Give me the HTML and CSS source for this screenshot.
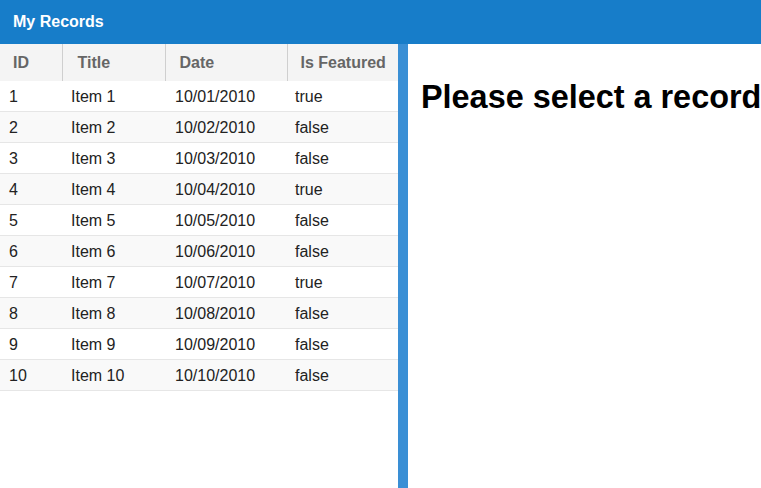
FILE: index.html
```html
<!DOCTYPE html>
<html>
<head>
<meta charset="utf-8">
<link rel="stylesheet" href="styles.css">
</head>
<body>
<div class="app">
  <header class="topbar">My Records</header>
  <div class="main">
    <div class="list-pane">
      <table class="grid">
        <colgroup>
          <col class="c-id"><col class="c-title"><col class="c-date"><col class="c-feat">
        </colgroup>
        <thead>
          <tr><th>ID</th><th>Title</th><th>Date</th><th>Is Featured</th></tr>
        </thead>
        <tbody>
          <tr><td>1</td><td>Item 1</td><td>10/01/2010</td><td>true</td></tr>
          <tr><td>2</td><td>Item 2</td><td>10/02/2010</td><td>false</td></tr>
          <tr><td>3</td><td>Item 3</td><td>10/03/2010</td><td>false</td></tr>
          <tr><td>4</td><td>Item 4</td><td>10/04/2010</td><td>true</td></tr>
          <tr><td>5</td><td>Item 5</td><td>10/05/2010</td><td>false</td></tr>
          <tr><td>6</td><td>Item 6</td><td>10/06/2010</td><td>false</td></tr>
          <tr><td>7</td><td>Item 7</td><td>10/07/2010</td><td>true</td></tr>
          <tr><td>8</td><td>Item 8</td><td>10/08/2010</td><td>false</td></tr>
          <tr><td>9</td><td>Item 9</td><td>10/09/2010</td><td>false</td></tr>
          <tr><td>10</td><td>Item 10</td><td>10/10/2010</td><td>false</td></tr>
        </tbody>
      </table>
    </div>
    <div class="splitter"></div>
    <div class="detail-pane">
      <h1 class="placeholder">Please select a record</h1>
    </div>
  </div>
</div>
</body>
</html>
```
FILE: styles.css
```css
html, body {
  margin: 0;
  padding: 0;
  height: 100%;
  overflow: hidden;
}
body {
  font-family: "Liberation Sans", Arial, sans-serif;
  font-size: 16px;
  color: #222;
  background: #fff;
}
.app {
  display: flex;
  flex-direction: column;
  height: 100%;
}
.topbar {
  height: 44px;
  line-height: 44px;
  padding: 0 13px;
  background: #177dc9;
  color: #fff;
  font-weight: bold;
  font-size: 16px;
  flex: none;
}
.main {
  flex: 1;
  display: flex;
  min-height: 0;
}
.list-pane {
  width: 398px;
  flex: none;
  overflow: hidden;
}
.grid {
  width: 398px;
  table-layout: fixed;
  border-collapse: collapse;
}
.c-id { width: 62px; }
.c-title { width: 103px; }
.c-date { width: 122px; }
.c-feat { width: 111px; }
.grid th {
  text-align: left;
  background: #f4f4f4;
  color: #666;
  font-weight: bold;
  font-size: 16px;
  line-height: 18px;
  padding: 10px 0 9px 13px;
  border-right: 1px solid #cfcfcf;
  white-space: nowrap;
}
.grid th:nth-child(2) { padding-left: 15px; }
.grid th:nth-child(3) { padding-left: 14px; }
.grid th:last-child {
  border-right: none;
}
.grid td {
  padding: 7px 0 5px 9px;
  line-height: 18px;
  border-bottom: 1px solid #e6e6e6;
  white-space: nowrap;
}
.grid td:nth-child(3) { padding-left: 10px; }
.grid td:last-child { padding-left: 8px; }
.grid tbody tr:nth-child(even) td {
  background: #f9f9f9;
}
.splitter {
  width: 10px;
  flex: none;
  background: #3a8fd5;
}
.detail-pane {
  flex: 1;
  padding: 14px 13px;
  white-space: nowrap;
  overflow: hidden;
}
.placeholder {
  margin: 21px 0;
  font-size: 32.4px;
  font-weight: bold;
  color: #000;
}
```
